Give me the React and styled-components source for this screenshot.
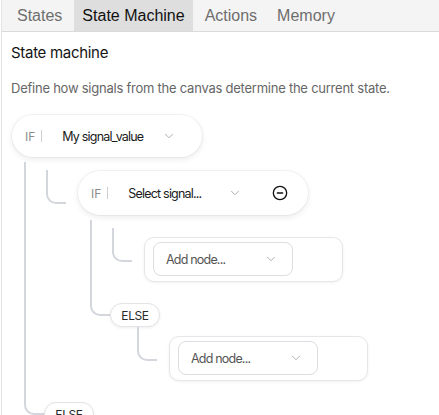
import React from "react";
import styled, { createGlobalStyle } from "styled-components";
import { ChevronDown, CircleMinus } from "lucide-react";

const GlobalStyle = createGlobalStyle`
  body {
    margin: 0;
    background: #fff;
    font-family: Inter, "Liberation Sans", sans-serif;
  }
`;

const LINE = "#d3d6dc";

const Panel = styled.div`
  margin-left: 1px;
  border-left: 1px solid #e3e3e3;
  min-height: 100vh;
`;

const TabBar = styled.div`
  display: flex;
  gap: 4px;
  height: 31px;
  padding-left: 7px;
  background: #f4f4f4;
  border-bottom: 1px solid #dadada;
`;

const Tab = styled.button`
  margin: 0;
  border: 0;
  padding: 0 8px;
  font: 16px "Liberation Sans", Arial, sans-serif;
  color: ${(p) => (p.$active ? "#111" : "#6e6e6e")};
  background: ${(p) => (p.$active ? "#dedede" : "transparent")};
  cursor: pointer;
`;

const Content = styled.div`
  padding: 12px 9px 40px;
`;

const Title = styled.h2`
  margin: 0;
  font-size: 15px;
  line-height: 18px;
  font-weight: 400;
  letter-spacing: -0.3px;
  color: #141414;
`;

const Description = styled.p`
  margin: 18px 0 0;
  font-size: 13px;
  line-height: 16px;
  letter-spacing: -0.24px;
  color: #666;
`;

const Tree = styled.div`
  margin: 19px 0 0 1px;
`;

const Block = styled.div`
  display: flex;
  flex-direction: column;
  align-items: flex-start;
  margin-top: ${(p) => (p.$nested ? "1px" : "0")};
`;

const IfPill = styled.div`
  display: flex;
  align-items: center;
  box-sizing: border-box;
  min-height: 42px;
  padding: 8px ${(p) => (p.$removable ? "14px" : "26px")} 8px 13px;
  border-radius: 22px;
  background: #fff;
  box-shadow: 0 2px 6px rgba(0, 0, 0, 0.09), 0 0 0 1px rgba(0, 0, 0, 0.035);
`;

const IfLabel = styled.span`
  font-size: 12px;
  color: #8b8b8b;
`;

const Divider = styled.span`
  width: 1px;
  height: 12px;
  margin-left: 6px;
  background: #cfcfcf;
`;

const SignalTrigger = styled.div`
  display: flex;
  align-items: center;
  justify-content: space-between;
  width: 134px;
  padding-left: 20px;
  box-sizing: border-box;
`;

const SignalText = styled.span`
  font-size: 12.5px;
  letter-spacing: -0.8px;
  color: #1a1a1a;
`;

const RemoveButton = styled.button`
  display: flex;
  align-items: center;
  justify-content: center;
  width: 28px;
  height: 28px;
  margin-left: 24px;
  padding: 0;
  border: 0;
  background: transparent;
  color: #111;
  cursor: pointer;
`;

const Branches = styled.div`
  display: flex;
  margin: 5px 0 0 12px;
`;

const Rail = styled.div`
  display: flex;
  flex-direction: column;
  width: 20px;
  flex-shrink: 0;
`;

const RailLine = styled.div`
  flex: 1;
  border-left: 2px solid ${LINE};
  border-bottom: 2px solid ${LINE};
  border-bottom-left-radius: 10px;
`;

const RailTail = styled.div`
  height: 11px;
`;

const ThenColumn = styled.div`
  display: flex;
  flex-direction: column;
  align-items: flex-start;
  padding-top: 8px;
`;

const ChildRow = styled.div`
  display: flex;
  align-items: flex-start;
`;

const Elbow = styled.div`
  width: 20px;
  height: 34px;
  margin: 0 12px 0 2px;
  flex-shrink: 0;
  box-sizing: border-box;
  border-left: 2px solid ${LINE};
  border-bottom: 2px solid ${LINE};
  border-bottom-left-radius: 10px;
`;

const ElsePill = styled.div`
  display: flex;
  align-items: center;
  justify-content: center;
  box-sizing: border-box;
  height: 24px;
  width: 50px;
  margin-top: 21px;
  border: 1px solid #e3e3e8;
  border-radius: 12px;
  background: #fff;
  box-shadow: 0 1px 3px rgba(0, 0, 0, 0.07);
  font-size: 12px;
  letter-spacing: -0.4px;
  color: #2a2a2a;
`;

const ElseChildren = styled.div`
  display: flex;
  flex-direction: column;
  padding-left: 57px;
`;

const NodeCard = styled.div`
  box-sizing: border-box;
  width: 199px;
  margin-top: 9px;
  padding: 4px 8px 5px;
  border: 1px solid #e6e6ea;
  border-radius: 10px;
  background: #fff;
  box-shadow: 0 1px 3px rgba(0, 0, 0, 0.06);
`;

const NodeSelect = styled.div`
  display: flex;
  align-items: center;
  justify-content: space-between;
  box-sizing: border-box;
  width: 140px;
  height: 34px;
  padding: 0 14px 0 12px;
  border: 1px solid #dcdce1;
  border-radius: 8px;
  font-size: 12.5px;
  letter-spacing: -0.8px;
  color: #555;
`;

const tabs = ["States", "State Machine", "Actions", "Memory"];

const machine = {
  type: "if",
  signal: "My signal_value",
  then: [
    {
      type: "if",
      signal: null,
      removable: true,
      then: [{ type: "add" }],
      else: [{ type: "add" }],
    },
  ],
  else: [{ type: "add" }],
};

const AddNode = () => (
  <NodeCard>
    <NodeSelect>
      <span>Add node...</span>
      <ChevronDown size={14} strokeWidth={1.5} color="#a3a3a3" />
    </NodeSelect>
  </NodeCard>
);

const Children = ({ items }) =>
  items.map((child, i) => (
    <ChildRow key={i}>
      <Elbow />
      <NodeView node={child} nested />
    </ChildRow>
  ));

const Condition = ({ node, nested }) => (
  <Block $nested={nested}>
    <IfPill $removable={node.removable}>
      <IfLabel>IF</IfLabel>
      <Divider />
      <SignalTrigger>
        <SignalText>{node.signal || "Select signal..."}</SignalText>
        <ChevronDown size={14} strokeWidth={1.5} color="#a3a3a3" />
      </SignalTrigger>
      {node.removable && (
        <RemoveButton aria-label="Remove condition">
          <CircleMinus size={16} strokeWidth={2} />
        </RemoveButton>
      )}
    </IfPill>
    <Branches>
      <Rail>
        <RailLine />
        <RailTail />
      </Rail>
      <ThenColumn>
        <Children items={node.then} />
        <ElsePill>ELSE</ElsePill>
      </ThenColumn>
    </Branches>
    <ElseChildren>
      <Children items={node.else} />
    </ElseChildren>
  </Block>
);

const NodeView = ({ node, nested }) =>
  node.type === "if" ? <Condition node={node} nested={nested} /> : <AddNode />;

export default function App() {
  return (
    <>
      <GlobalStyle />
      <Panel>
        <TabBar>
          {tabs.map((t) => (
            <Tab key={t} $active={t === "State Machine"}>
              {t}
            </Tab>
          ))}
        </TabBar>
        <Content>
          <Title>State machine</Title>
          <Description>
            Define how signals from the canvas determine the current state.
          </Description>
          <Tree>
            <Condition node={machine} />
          </Tree>
        </Content>
      </Panel>
    </>
  );
}
